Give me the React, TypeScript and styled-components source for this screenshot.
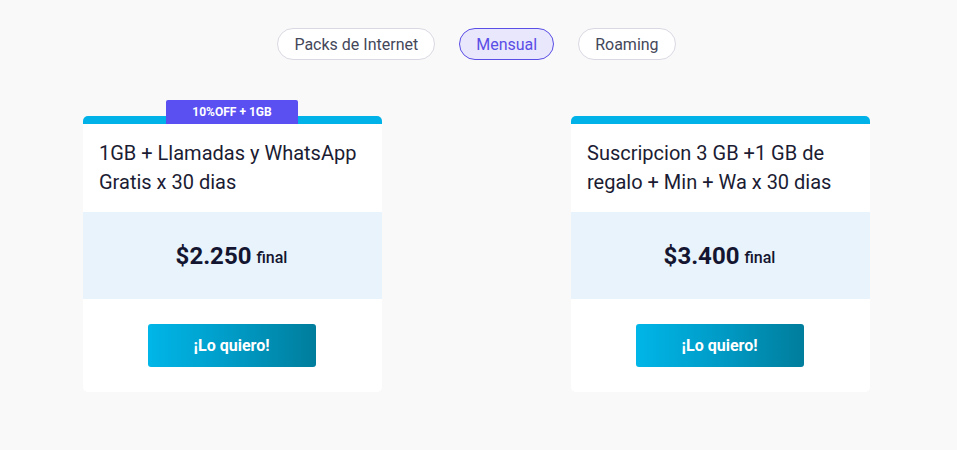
import styled, { createGlobalStyle } from 'styled-components';

const GlobalStyle = createGlobalStyle`
  body {
    margin: 0;
    background: #f9f9f9;
    font-family: Roboto, "Liberation Sans", sans-serif;
  }
`;

const plans = [
  {
    title: '1GB + Llamadas y WhatsApp Gratis x 30 dias',
    price: '$2.250',
    badge: '10%OFF + 1GB',
  },
  {
    title: 'Suscripcion 3 GB +1 GB de regalo + Min + Wa x 30 dias',
    price: '$3.400',
  },
];

const tabs = ['Packs de Internet', 'Mensual', 'Roaming'];

export default function App() {
  return (
    <Page>
      <GlobalStyle />
      <Tabs>
        {tabs.map((t) => (
          <Tab key={t} $active={t === 'Mensual'}>
            {t}
          </Tab>
        ))}
      </Tabs>
      <Cards>
        {plans.map((p) => (
          <Card key={p.price}>
            {p.badge && <Badge>{p.badge}</Badge>}
            <Title>{p.title}</Title>
            <PriceBox>
              <Price>{p.price}</Price>
              <Final>final</Final>
            </PriceBox>
            <Actions>
              <BuyButton>¡Lo quiero!</BuyButton>
            </Actions>
          </Card>
        ))}
      </Cards>
    </Page>
  );
}

const Page = styled.main`
  width: 953px;
  padding-top: 28px;
`;

const Tabs = styled.nav`
  display: flex;
  justify-content: center;
  gap: 24px;
`;

const Tab = styled.button<{ $active?: boolean }>`
  height: 32px;
  padding: 0 16px;
  border-radius: 16px;
  font-family: Roboto, "Liberation Sans", sans-serif;
  font-size: 16px;
  border: 1px solid ${(p) => (p.$active ? '#5a4ee6' : '#d9d9e3')};
  background: ${(p) => (p.$active ? '#e9e7fb' : '#ffffff')};
  color: ${(p) => (p.$active ? '#5a4ee6' : '#44475a')};
  cursor: pointer;
`;

const Cards = styled.section`
  display: flex;
  gap: 189px;
  padding: 56px 0 0 83px;
`;

const Card = styled.article`
  position: relative;
  width: 299px;
  background: #ffffff;
  border-top: 8px solid #00b2e7;
  border-radius: 5px;
`;

const Badge = styled.div`
  position: absolute;
  top: -24px;
  left: 83px;
  width: 132px;
  height: 24px;
  display: flex;
  align-items: center;
  justify-content: center;
  background: #5a50f2;
  color: #ffffff;
  font-size: 12px;
  font-weight: 700;
  border-radius: 2px 2px 0 0;
`;

const Title = styled.h3`
  margin: 0;
  padding: 15px 16px;
  font-size: 20px;
  line-height: 29px;
  font-weight: 400;
  color: #1b1c33;
`;

const PriceBox = styled.div`
  height: 87px;
  display: flex;
  align-items: center;
  justify-content: center;
  gap: 5px;
  padding-right: 2px;
  background: #e8f3fc;
  color: #141530;
`;

const Price = styled.span`
  font-size: 24px;
  font-weight: 700;
`;

const Final = styled.span`
  font-size: 16px;
  font-weight: 500;
  padding-top: 4px;
`;

const Actions = styled.div`
  display: flex;
  justify-content: center;
  padding: 25px 2px 25px 0;
`;

const BuyButton = styled.button`
  width: 168px;
  height: 43px;
  border: none;
  border-radius: 3px;
  background: linear-gradient(90deg, #00b6e8 0%, #009bc6 50%, #007d9c 100%);
  color: #ffffff;
  font-family: Roboto, "Liberation Sans", sans-serif;
  font-size: 16px;
  font-weight: 700;
  cursor: pointer;
`;
